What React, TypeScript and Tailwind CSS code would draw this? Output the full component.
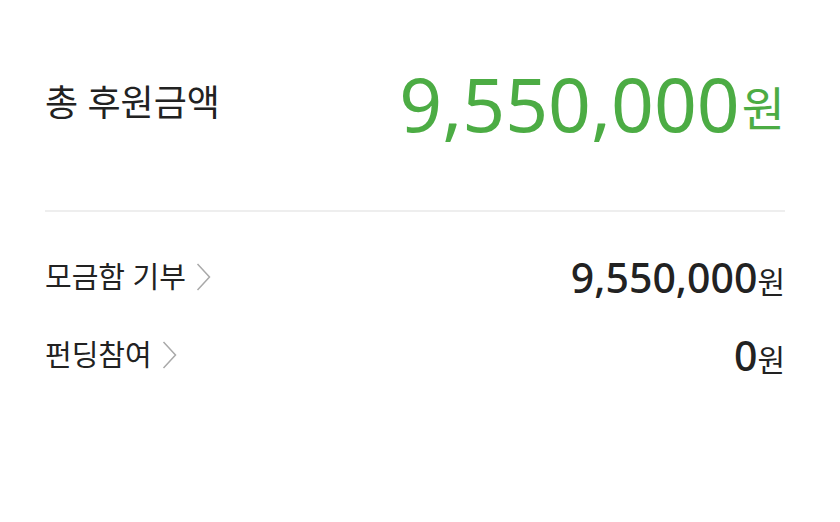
import React from 'react';

const rows = [
  { label: '모금함 기부', amount: '9,550,000' },
  { label: '펀딩참여', amount: '0' },
];

const Chevron: React.FC = () => (
  <svg width="15" height="28" viewBox="0 0 15 28" fill="none" className="ml-[10px]">
    <path d="M1.5 1 L13.5 14 L1.5 27" stroke="#a9a9a9" strokeWidth="1.5" />
  </svg>
);

const App: React.FC = () => {
  return (
    <div
      className="w-[840px] h-[522px] bg-white pl-[45px] pr-[55px] text-[#222]"
      style={{ fontFamily: '"Noto Sans", "Noto Sans CJK KR", sans-serif' }}
    >
      <div className="flex items-center justify-between h-[210px] pb-[4px]">
        <span className="text-[36px] font-normal">총 후원금액</span>
        <span className="flex items-baseline text-[#4cac44]">
          <span className="text-[75px] leading-none font-normal">9,550,000</span>
          <span className="text-[47px] leading-none ml-[2px] relative -top-[6px]">원</span>
        </span>
      </div>
      <div className="h-[2px] bg-[#eeeeee]" />
      <div className="pt-[47px] flex flex-col gap-[42px]">
        {rows.map((row) => (
          <div key={row.label} className="flex items-center justify-between h-[36px]">
            <span className="flex items-center text-[29px]">
              {row.label}
              <Chevron />
            </span>
            <span className="flex items-baseline">
              <span className="text-[41px] leading-none font-medium">{row.amount}</span>
              <span className="text-[30px] leading-none">원</span>
            </span>
          </div>
        ))}
      </div>
    </div>
  );
};

export default App;
